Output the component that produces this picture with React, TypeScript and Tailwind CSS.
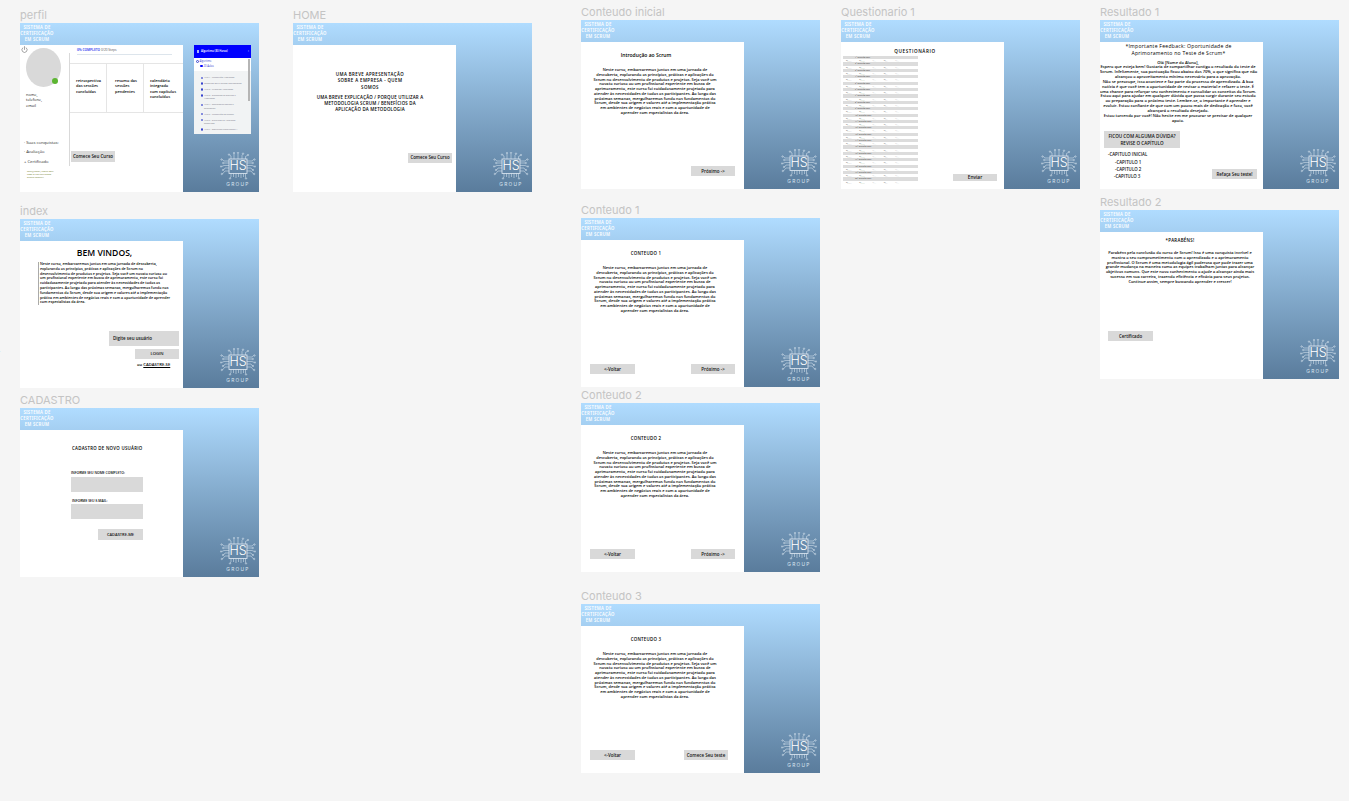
import React from 'react';
import { Power } from 'lucide-react';

const curso = [
  'Neste curso, embarcaremos juntos em uma jornada de',
  'descoberta, explorando os princípios, práticas e aplicações do',
  'Scrum no desenvolvimento de produtos e projetos. Seja você um',
  'novato curioso ou um profissional experiente em busca de',
  'aprimoramento, este curso foi cuidadosamente projetado para',
  'atender às necessidades de todos os participantes. Ao longo das',
  'próximas semanas, mergulharemos fundo nos fundamentos do',
  'Scrum, desde sua origem e valores até a implementação prática',
  'em ambientes de negócios reais e com a oportunidade de',
  'aprender com especialistas da área.',
];

const boasVindas = [
  'Neste curso, embarcaremos juntos em uma jornada de descoberta,',
  'explorando os princípios, práticas e aplicações de Scrum no',
  'desenvolvimento de produtos e projetos. Seja você um novato curioso ou',
  'um profissional experiente em busca de aprimoramento, este curso foi',
  'cuidadosamente projetado para atender às necessidades de todos os',
  'participantes. Ao longo das próximas semanas, mergulharemos fundo nos',
  'fundamentos do Scrum, desde sua origem e valores até a implementação',
  'prática em ambientes de negócios reais e com a oportunidade de aprender',
  'com especialistas da área.',
];

const feedback = [
  'Olá [Nome do Aluno],',
  'Espero que esteja bem! Gostaria de compartilhar contigo o resultado do teste de',
  'Scrum. Infelizmente, sua pontuação ficou abaixo dos 70%, o que significa que não',
  'alcançou o aproveitamento mínimo necessário para a aprovação.',
  'Não se preocupe, isso acontece e faz parte do processo de aprendizado. A boa',
  'notícia é que você tem a oportunidade de revisar o material e refazer o teste. É',
  'uma chance para reforçar seu conhecimento e consolidar os conceitos do Scrum.',
  'Estou aqui para ajudar em qualquer dúvida que possa surgir durante seu estudo',
  'ou preparação para o próximo teste. Lembre-se, o importante é aprender e',
  'evoluir. Estou confiante de que com um pouco mais de dedicação e foco, você',
  'alcançará o resultado desejado.',
  'Estou torcendo por você! Não hesite em me procurar se precisar de qualquer',
  'apoio.',
];

const parabens = [
  'Parabéns pela conclusão do curso de Scrum! Isso é uma conquista incrível e',
  'mostra o seu comprometimento com o aprendizado e o aprimoramento',
  'profissional. O Scrum é uma metodologia ágil poderosa que pode trazer uma',
  'grande mudança na maneira como as equipes trabalham juntas para alcançar',
  'objetivos comuns. Que este novo conhecimento o ajude a alcançar ainda mais',
  'sucesso em sua carreira, trazendo eficiência e eficácia para seus projetos.',
  'Continue assim, sempre buscando aprender e crescer!',
];

const aulas = [
  'Aula 1 - Introdução Algoritmos',
  'Conteúdo aqui e outros Interessantes',
  'Aula 2 - Primeiros Algoritmos',
  'Aula 3 - Elementos de Entrada e\nAlgoritmos',
  'Aula 4 - Operadores Lógicos e\nRelacionais',
  'Aula 5 - Introdução ao Scratch',
  'Aula 6 - Exercícios de Algoritmo\nResolvidos',
  'Aula 7 - Estruturas Condicionais 1',
];

function Lines({ lines, className = '' }: { lines: string[]; className?: string }) {
  return (
    <div className={className}>
      {lines.map((line) => (
        <div key={line} className="whitespace-nowrap">
          {line}
        </div>
      ))}
    </div>
  );
}

function Btn({ children, className = '' }: { children: React.ReactNode; className?: string }) {
  return (
    <div className={`flex items-center justify-center bg-[#d9d9d9] font-semibold text-[#111] whitespace-nowrap ${className}`}>
      {children}
    </div>
  );
}

function Logo({ className = '' }: { className?: string }) {
  const pads = [
    [9, 2.6], [14, 1], [18, 0.7], [23, 1.6], [28, 3],
    [1.5, 7.5], [3.2, 11], [1, 14.5], [3, 18], [1.8, 22],
    [34.5, 7.5], [32.8, 11], [35, 14.5], [33, 18], [34.2, 22],
    [10, 26.5], [26, 26.5],
  ];
  return (
    <div className={`absolute flex w-[36px] flex-col items-center ${className}`}>
      <div className="relative h-[28px] w-[36px]">
        <svg viewBox="0 0 36 28" className="absolute inset-0 h-full w-full" fill="none" stroke="#e3ecf4" strokeWidth="0.5">
          <rect x="9" y="7" width="18" height="14.5" strokeWidth="0.8" />
          <path d="M11 7V4L9.6 3M14 7V1.6M18 7V1.4M22 7V3.5L23 2.2M25.5 7V4.5L27.4 3.4" />
          <path d="M9 9H4L2.2 7.5M9 11H4M9 13.5H4L1.7 14.5M9 16H5L3.6 18M9 19H5L2.4 22" />
          <path d="M27 9H32L33.8 7.5M27 11H32.2M27 13.5H32L34.4 14.5M27 16H31L32.5 18M27 19H31L33.6 22" />
          <path d="M11 21.5V25L10.2 25.9M13.5 21.5V25M16 21.5V26M18.5 21.5V25M21 21.5V26M23.5 21.5V25M25.5 21.5V25L25.8 25.9" />
          {pads.map(([cx, cy]) => (
            <circle key={`${cx}-${cy}`} cx={cx} cy={cy} r="0.7" />
          ))}
        </svg>
        <span className="absolute left-[9px] top-[7px] flex h-[14.5px] w-[18px] items-center justify-center font-['Inter',sans-serif] text-[12.5px] font-light leading-none text-white">
          HS
        </span>
      </div>
      <span className="mt-[1px] font-['Inter',sans-serif] text-[4.8px] leading-[6px] tracking-[1.3px] text-[#dbe6f0]">GROUP</span>
    </div>
  );
}

function Frame({
  label,
  className,
  overlay,
  children,
}: {
  label: string;
  className: string;
  overlay?: React.ReactNode;
  children?: React.ReactNode;
}) {
  return (
    <section className={`absolute flex w-[239px] flex-col ${className}`}>
      <h2 className="h-[15px] font-['Inter',sans-serif] text-[11px] font-normal leading-[15px] text-[#c4c4c4] whitespace-nowrap">
        {label}
      </h2>
      <div className="relative flex h-[169px] flex-col bg-gradient-to-b from-[#b0dcff] to-[#5a7c9c]">
        <header className="flex h-[22px] w-[34px] shrink-0 flex-col items-center pt-[2px] text-center text-[4.3px] font-semibold leading-[5.9px] tracking-[0.25px] text-white whitespace-nowrap">
          <span>SISTEMA DE</span>
          <span>CERTIFICAÇÃO</span>
          <span>EM SCRUM</span>
        </header>
        <div className="flex w-[163px] flex-1 flex-col overflow-hidden bg-white font-['Open_Sans',sans-serif] text-black">
          {children}
        </div>
        <Logo className="right-[3px] bottom-[5px]" />
        {overlay}
      </div>
    </section>
  );
}

function Conteudo({
  title,
  titleClass,
  voltar = true,
  proximo = 'Próximo ->',
  proximoClass = 'mr-[9px] w-[44px]',
}: {
  title: string;
  titleClass: string;
  voltar?: boolean;
  proximo?: string;
  proximoClass?: string;
}) {
  return (
    <>
      <div className={`mt-[10px] w-[130px] text-center font-semibold ${titleClass}`}>{title}</div>
      <Lines
        lines={curso}
        className="mt-[10px] w-[148px] text-center text-[3.95px] font-semibold leading-[4.75px] text-black"
      />
      <div className="mt-auto mb-[13px] flex h-[10px] items-center justify-between pl-[9px]">
        {voltar ? <Btn className="h-[10px] w-[45px] text-[4.5px]">{'<-Voltar'}</Btn> : <span />}
        <Btn className={`h-[10px] text-[4.5px] ${proximoClass}`}>{proximo}</Btn>
      </div>
    </>
  );
}

function Perfil() {
  return (
    <div className="relative flex flex-1">
      <aside className="flex w-[50px] shrink-0 flex-col">
        <Power className="ml-[1px] mt-[1px] h-[7px] w-[7px] text-[#333]" strokeWidth={1.5} />
        <div className="relative ml-[6px] mt-[-5px] h-[39px] w-[35px] rounded-[50%] bg-[#d9d9d9]">
          <span className="absolute bottom-[3px] right-[3px] h-[6px] w-[6px] rounded-full bg-[#5cb531]" />
        </div>
        <div className="ml-[6px] mt-[5px] text-[3.9px] leading-[5.3px] text-[#222]">
          <div>nome,</div>
          <div>telefone,</div>
          <div>email</div>
        </div>
        <div className="ml-[4px] mt-[30px] text-[4.2px] leading-[9.6px] text-[#333] whitespace-nowrap">
          <div>· Suas conquistas:</div>
          <div>· Avaliação</div>
          <div>+ Certificado</div>
        </div>
        <div className="ml-[7px] mt-[3px] text-[2.4px] leading-[3px] text-[#6f7d1e] whitespace-nowrap">
          <div>meu@email, clique aqui</div>
          <div>caso já um certificado</div>
          <div>queira concluir</div>
        </div>
      </aside>
      <span className="absolute left-[49px] top-[8px] h-[113px] w-px bg-[#d9d9d9]" />
      <div className="flex w-[113px] flex-col">
        <div className="ml-[7px] mt-[3px] flex h-[15px] flex-col">
          <div className="text-[3.2px] leading-[5px] text-[#555] whitespace-nowrap">
            <span className="font-bold text-[#4a57f0]">0% COMPLETO</span> 0/20 Steps
          </div>
          <div className="mt-[1px] h-[1px] w-[95px] bg-[#dde5ec]" />
        </div>
        <div className="grid h-[50px] grid-cols-[37px_37px_39px] border-y border-[#e5e5e5] text-[3.9px] font-semibold leading-[5.3px] text-black">
          <div className="border-r border-[#e5e5e5] pl-[6px] pt-[14px]">
            retrospectiva
            <br />
            das sessões
            <br />
            concluídas
          </div>
          <div className="border-r border-[#e5e5e5] pl-[8px] pt-[14px]">
            resumo das
            <br />
            sessões
            <br />
            pendentes
          </div>
          <div className="pl-[6px] pt-[14px]">
            calendário
            <br />
            integrado
            <br />
            com capítulos
            <br />
            concluídos
          </div>
        </div>
        <Btn className="ml-[1px] mt-[38px] h-[11px] w-[44px] text-[4.5px]">Comece Seu Curso</Btn>
      </div>
    </div>
  );
}

function AlgoritmoCard() {
  return (
    <div className="absolute left-[174px] top-[22px] flex h-[89px] w-[57px] flex-col overflow-hidden bg-[#f1f3f4] font-['Open_Sans',sans-serif]">
      <div className="flex h-[13px] shrink-0 items-center justify-between bg-[#0000ff] px-[2px] text-[2.7px] font-semibold text-white">
        <span className="ml-[1px] mr-[2px] h-[3px] w-[2px] bg-[#aab4ff]" />
        <span className="flex-1 whitespace-nowrap">Algoritmo (80 Horas)</span>
        <span>›</span>
      </div>
      <div className="flex h-[13px] shrink-0 flex-col bg-white pl-[2px] pt-[1px] text-[2.6px] leading-[4.5px] text-[#3844d0]">
        <div className="flex items-center gap-[1px]">
          <span className="h-[2.5px] w-[2.5px] rounded-full border-[0.4px] border-[#3844d0]" />
          Algoritmo
        </div>
        <div className="ml-[4px] flex items-center gap-[1px]">
          <span className="h-[2.5px] w-[2.5px] rounded-full bg-[#0000ff]" />
          20 Aulas
        </div>
      </div>
      <div className="flex flex-1 flex-col gap-[2.7px] pl-[7px] pt-[5px] text-[2.15px] leading-[3.3px] text-[#778]">
        {aulas.map((aula) => (
          <div key={aula} className="relative whitespace-pre pl-[3px]">
            <span className="absolute left-0 top-[0.5px] h-[2.3px] w-[2.3px] rounded-full border-[0.4px] border-[#3844d0]" />
            {aula}
          </div>
        ))}
        <span className="h-[2.3px] w-[2.3px] shrink-0 rounded-full border-[0.4px] border-[#3844d0]" />
      </div>
      <div className="absolute right-[1px] top-[14px] h-[42px] w-[2px] bg-[#b5b5b5]" />
    </div>
  );
}

function Questionario() {
  const rows = Array.from({ length: 20 }, (_, i) => i + 1);
  return (
    <>
      <div className="mt-[5px] h-[9px] w-[148px] text-center text-[4.6px] font-semibold tracking-[0.6px] leading-[9px]">
        QUESTIONÁRIO
      </div>
      <div className="flex flex-1 overflow-hidden">
        <div className="ml-[2px] flex w-[75px] flex-col">
          {rows.map((n) => (
            <div key={n} className="h-[6.4px] shrink-0 text-[2.1px] leading-[3.2px] text-[#333]">
              <div className="h-[3.2px] bg-[#dcdcdc] pl-[12px]">{n}ª questão aqui</div>
              <div className="flex justify-between pl-[3px] pr-[19px]">
                <span className="text-[#333]">a)____</span>
                <span className="text-[#444]">b)____</span>
                <span className="text-[#bbb]">c)__</span>
                <span className="text-[#666]">d)__</span>
                <span className="text-[#bbb]">e)__</span>
              </div>
            </div>
          ))}
        </div>
        <Btn className="ml-[35px] mt-[118px] h-[7px] w-[44px] text-[4.8px] font-medium">Enviar</Btn>
      </div>
    </>
  );
}

export default function App() {
  return (
    <main className="relative h-[801px] w-[1349px] overflow-hidden bg-[#f5f5f5]">
      <span className="absolute left-[-2px] top-[349px] text-[5px] text-[#6f7d1e]">r</span>

      <Frame label="perfil" className="left-[20px] top-[8px]" overlay={<AlgoritmoCard />}>
        <Perfil />
      </Frame>

      <Frame label="HOME" className="left-[293px] top-[8px]">
        <div className="ml-[17px] mt-[26px] flex w-[120px] flex-col text-center text-[4.4px] font-semibold leading-[6.3px] tracking-[0.2px]">
          <div className="tracking-[0.4px] whitespace-nowrap">
            UMA BREVE APRESENTAÇÃO
            <br />
            SOBRE A EMPRESA - QUEM
            <br />
            SOMOS
          </div>
          <div className="mt-[4px] whitespace-nowrap">
            UMA BREVE EXPLICAÇÃO / PORQUE UTILIZAR A
            <br />
            METODOLOGIA SCRUM / BENEFÍCIOS DA
            <br />
            APLICAÇÃO DA METODOLOGIA
          </div>
        </div>
        <Btn className="ml-[115px] mt-[40px] h-[10px] w-[44px] text-[4.4px]">Comece Seu Curso</Btn>
      </Frame>

      <Frame label="index" className="left-[20px] top-[204px]">
        <div className="ml-[3px] mt-[6px] w-[163px] text-center text-[8.6px] font-semibold leading-[12px]">BEM VINDOS,</div>
        <Lines
          lines={boasVindas}
          className="ml-[18px] mt-[3px] border-l border-[#aaa] pl-[1px] text-[3.6px] font-semibold leading-[4.8px] text-black"
        />
        <Btn className="ml-[89px] mt-[26px] h-[15px] w-[70px] justify-start pl-[4px] text-[4.5px]">Digite seu usuário</Btn>
        <Btn className="ml-[115px] mt-[3px] h-[10px] w-[44px] text-[4.2px]">LOGIN</Btn>
        <div className="ml-[117px] mt-[3px] text-[4.2px] font-semibold leading-[6px] whitespace-nowrap">
          ou <span className="underline decoration-[0.4px]">CADASTRE-SE</span>
        </div>
      </Frame>

      <Frame label="CADASTRO" className="left-[20px] top-[393px]">
        <div className="ml-[52px] mt-[15px] text-[4.4px] font-semibold leading-[6px] tracking-[0.25px] whitespace-nowrap">
          CADASTRO DE NOVO USUÁRIO
        </div>
        <div className="ml-[51px] mt-[19px] text-[3.4px] font-semibold leading-[5px] whitespace-nowrap">INFORME SEU NOME COMPLETO:</div>
        <div className="ml-[51px] mt-[2px] h-[15px] w-[72px] bg-[#d9d9d9]" />
        <div className="ml-[52px] mt-[6px] text-[3.4px] font-semibold leading-[5px] whitespace-nowrap">INFORME SEU E-MAIL:</div>
        <div className="ml-[51px] mt-[1px] h-[15px] w-[72px] bg-[#d9d9d9]" />
        <Btn className="ml-[78px] mt-[10px] h-[11px] w-[45px] text-[4px]">CADASTRE-ME</Btn>
      </Frame>

      <Frame label="Conteudo inicial" className="left-[581px] top-[5px]">
        <Conteudo title="Introdução ao Scrum" titleClass="text-[5px] leading-[6px]" voltar={false} />
      </Frame>
      <Frame label="Conteudo 1" className="left-[581px] top-[203px]">
        <Conteudo title="CONTEUDO 1" titleClass="text-[4.4px] leading-[6px] tracking-[0.25px]" />
      </Frame>
      <Frame label="Conteudo 2" className="left-[581px] top-[388px]">
        <Conteudo title="CONTEUDO 2" titleClass="text-[4.4px] leading-[6px] tracking-[0.25px]" />
      </Frame>
      <Frame label="Conteudo 3" className="left-[581px] top-[589px]">
        <Conteudo
          title="CONTEUDO 3"
          titleClass="text-[4.4px] leading-[6px] tracking-[0.25px]"
          proximo="Comece Seu teste"
          proximoClass="mr-[16px] w-[44px]"
        />
      </Frame>

      <Frame label="Questionario 1" className="left-[841px] top-[5px]">
        <Questionario />
      </Frame>

      <Frame label="Resultado 1" className="left-[1100px] top-[5px]">
        <div className="mt-[1px] w-[157px] text-center text-[5.1px] font-medium leading-[7.3px] tracking-[0.25px]">
          *Importante Feedback: Oportunidade de
          <br />
          Aprimoramento no Teste de Scrum*
        </div>
        <Lines lines={feedback} className="mt-[3px] w-[156px] text-center text-[4px] font-semibold leading-[4.83px] text-black" />
        <Btn className="ml-[4px] mt-[8px] h-[17px] w-[76px] text-center text-[4.6px] leading-[7px]">
          FICOU COM ALGUMA DÚVIDA?
          <br />
          REVISE O CAPÍTULO
        </Btn>
        <div className="flex">
          <div className="ml-[8px] mt-[3px] w-[96px] text-[4.4px] font-semibold leading-[7.2px] text-[#111] whitespace-nowrap">
            <div>-CAPITULO INICIAL</div>
            <div className="pl-[7px]">-CAPITULO 1</div>
            <div className="pl-[7px]">-CAPITULO 2</div>
            <div className="pl-[6px]">-CAPITULO 3</div>
          </div>
          <Btn className="ml-[8px] mt-[21px] h-[10px] w-[45px] text-[4.4px]">Refaça Seu teste!</Btn>
        </div>
      </Frame>

      <Frame label="Resultado 2" className="left-[1100px] top-[195px]">
        <div className="mt-[5px] w-[160px] text-center text-[4.4px] font-semibold leading-[6px] tracking-[0.3px]">*PARABÉNS!</div>
        <Lines lines={parabens} className="mt-[8px] w-[160px] text-center text-[3.95px] font-semibold leading-[4.75px] text-black" />
        <Btn className="ml-[8px] mt-[47px] h-[10px] w-[45px] text-[4.4px]">Certificado</Btn>
      </Frame>
    </main>
  );
}
